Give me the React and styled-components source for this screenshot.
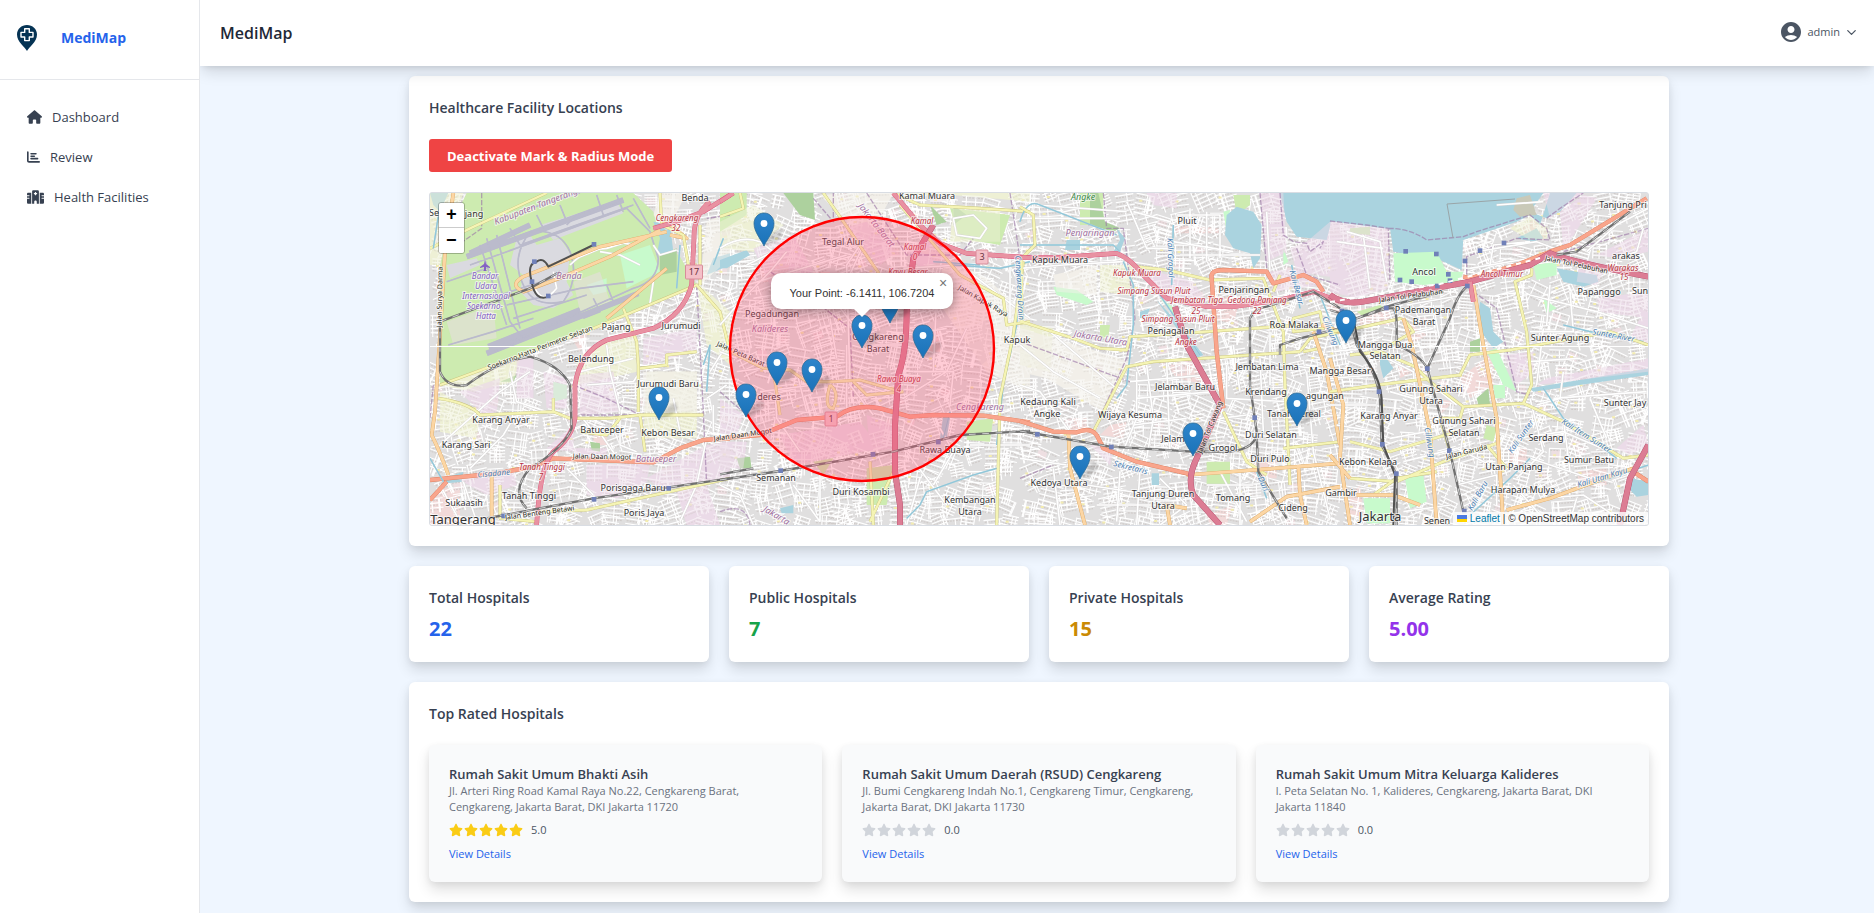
import React from "react";
import styled, { createGlobalStyle } from "styled-components";
import { FaHouse, FaChartBar, FaHospital, FaStar } from "react-icons/fa6";
import { MdAccountCircle } from "react-icons/md";
import { ChevronDown } from "lucide-react";

const GlobalStyle = createGlobalStyle`
  *, *::before, *::after { box-sizing: border-box; }
  body {
    margin: 0;
    background: #eff6ff;
    color: #374151;
    font-family: "Open Sans", "Noto Sans", sans-serif;
    font-size: 13px;
    line-height: 16px;
  }
  h1, h2, h3, p, ul { margin: 0; padding: 0; }
`;

const shadow = "0 8px 14px rgba(0, 0, 0, 0.12), 0 2px 6px rgba(0, 0, 0, 0.06)";

const Shell = styled.div`
  display: grid;
  grid-template-columns: 200px minmax(0, 1fr);
  min-height: 100vh;
`;

const Sidebar = styled.aside`
  position: relative;
  z-index: 6;
  background: #fff;
  border-right: 1px solid #e5e7eb;
`;

const Brand = styled.a`
  display: flex;
  align-items: center;
  gap: 24px;
  height: 80px;
  padding: 0 17px 3px;
  border-bottom: 1px solid #e5e7eb;
  color: #2563eb;
  font-size: 14px;
  font-weight: 700;
  text-decoration: none;
`;

const NavList = styled.ul`
  list-style: none;
  padding: 17px 27px;
`;

const NavLink = styled.a`
  display: flex;
  align-items: center;
  gap: 10px;
  height: 40px;
  color: #374151;
  text-decoration: none;
  svg {
    width: ${(p) => p.$iconWidth}px;
    height: 14px;
  }
`;

const Page = styled.div`
  display: flex;
  flex-direction: column;
  min-width: 0;
`;

const TopBar = styled.header`
  position: sticky;
  top: 0;
  z-index: 5;
  display: flex;
  align-items: center;
  justify-content: space-between;
  height: 66px;
  padding: 0 15px 0 20px;
  background: #fff;
  box-shadow: 0 8px 14px -2px rgba(0, 0, 0, 0.13), 0 3px 6px -3px rgba(0, 0, 0, 0.12);
`;

const PageTitle = styled.h1`
  color: #1f2937;
  font-size: 16px;
  line-height: 24px;
  font-weight: 600;
`;

const UserButton = styled.button`
  display: flex;
  align-items: center;
  gap: 4px;
  padding: 0 0 2px;
  border: 0;
  background: none;
  color: #4b5563;
  font: inherit;
  font-size: 11px;
  cursor: pointer;
`;

const Content = styled.main`
  display: flex;
  flex-direction: column;
  gap: 20px;
  width: 100%;
  max-width: 1264px;
  margin: 0 auto;
  padding: 10px 0 11px 4px;
`;

const Card = styled.section`
  padding: 20px;
  border-radius: 6px;
  background: #fff;
  box-shadow: ${shadow};
`;

const CardTitle = styled.h2`
  margin-bottom: ${(p) => (p.$tight ? 6 : 19)}px;
  color: #374151;
  font-size: 14px;
  line-height: 24px;
  font-weight: 600;
`;

const ModeButton = styled.button`
  display: block;
  height: 33px;
  margin-bottom: 20px;
  padding: 0 18px;
  border: 0;
  border-radius: 3px;
  background: #ef4444;
  color: #fff;
  font: inherit;
  font-weight: 700;
  cursor: pointer;
`;

const StatGrid = styled.div`
  display: grid;
  grid-template-columns: repeat(4, minmax(0, 1fr));
  gap: 20px;
`;

const StatValue = styled.p`
  color: ${(p) => p.$color};
  font-size: 20px;
  line-height: 26px;
  font-weight: 700;
`;

const HospitalGrid = styled.div`
  display: grid;
  grid-template-columns: repeat(3, minmax(0, 1fr));
  gap: 20px;
`;

const HospitalCard = styled.article`
  padding: 20px;
  border-radius: 6px;
  background: #f9fafb;
  box-shadow: ${shadow};
`;

const HospitalName = styled.h3`
  color: #374151;
  font-size: 13px;
  line-height: 18px;
  font-weight: 600;
`;

const Address = styled.p`
  color: #6b7280;
  font-size: 11px;
`;

const Rating = styled.div`
  display: flex;
  align-items: center;
  gap: 1px;
  height: 16px;
  margin: 7px 0 8px;
  color: ${(p) => (p.$filled ? "#facc15" : "#d1d5db")};
  font-size: 14px;
`;

const Score = styled.span`
  margin-left: 7px;
  color: #4b5563;
  font-size: 11px;
`;

const DetailsLink = styled.a`
  display: block;
  width: fit-content;
  color: #2563eb;
  font-size: 11px;
  text-decoration: none;
`;

const MapFrame = styled.div`
  position: relative;
  height: 334px;
  overflow: hidden;
  border: 1px solid #d9dde3;
  border-radius: 3px;
  background: #e4e2e0;
  font-family: "Liberation Sans", Arial, sans-serif;
`;

const MapCanvas = styled.svg`
  display: block;
  width: 100%;
  height: 100%;
`;

const ZoomControl = styled.div`
  position: absolute;
  top: 9px;
  left: 8px;
  display: flex;
  flex-direction: column;
  border: 1px solid rgba(0, 0, 0, 0.25);
  border-radius: 3px;
  overflow: hidden;
`;

const ZoomButton = styled.button`
  width: 25px;
  height: 25px;
  padding: 0;
  border: 0;
  border-bottom: ${(p) => (p.$divided ? "1px solid #ccc" : "0")};
  background: #fff;
  color: #000;
  font: bold 18px/24px "Liberation Mono", monospace;
  cursor: pointer;
`;

const Popup = styled.div`
  position: absolute;
  top: 80px;
  left: calc(50% - 268px);
  display: flex;
  align-items: center;
  justify-content: center;
  width: 182px;
  height: 36px;
  padding-top: 3px;
  border-radius: 10px;
  background: #fff;
  color: #333;
  font-size: 11px;
  box-shadow: 0 2px 11px rgba(0, 0, 0, 0.4);
  &::after {
    content: "";
    position: absolute;
    top: 36px;
    left: 83px;
    border: 8px solid transparent;
    border-top-color: #fff;
    border-bottom: 0;
  }
`;

const PopupClose = styled.button`
  position: absolute;
  top: 1px;
  right: 0;
  width: 20px;
  height: 19px;
  padding: 0;
  border: 0;
  background: none;
  color: #757575;
  font: 14px/19px "Liberation Sans", Arial, sans-serif;
  cursor: pointer;
`;

const Attribution = styled.div`
  position: absolute;
  right: 0;
  bottom: 0;
  display: flex;
  align-items: center;
  gap: 3px;
  height: 13px;
  padding: 0 4px;
  background: rgba(255, 255, 255, 0.8);
  color: #333;
  font-size: 10px;
  line-height: 13px;
  a { color: #0078a8; text-decoration: none; }
`;

/* ---------- map data ---------- */

const C = {
  grass: "#cdebb0", park: "#c8facc", wood: "#add19e", water: "#aad3df",
  industry: "#ebdbe8", farm: "#eef0d5", retail: "#f2dad9", land: "#f2efe9",
  apron: "#dadae0", house: "#e0dfdf",
};

const kinds = {
  motorway: { edge: "#dc5078", fill: "#e892a2", w: 14 },
  toll: { edge: "#b04a68", fill: "#dc7d94", w: 18 },
  trunk: { edge: "#dc8060", fill: "#f9a58c", w: 13 },
  primary: { edge: "#d9a560", fill: "#fcd6a4", w: 11 },
  secondary: { edge: "#c5c07a", fill: "#f5f4b4", w: 9 },
  minor: { edge: "#d4d2d2", fill: "#ffffff", w: 7 },
  runway: { edge: "#bbbbcc", fill: "#bbbbcc", w: 17 },
  taxi: { edge: "#bbbbcc", fill: "#bbbbcc", w: 5 },
  stream: { edge: "#aad3df", fill: "#8fc5d8", w: 5 },
};

// Each sheet uses thirds of a pixel counted from its own origin.
const sheets = [
  {
    origin: [420, 185],
    areas: [
      [C.farm, "M30 24H130L80 150L60 240H30Z M830 290L930 380V540L860 480Z M560 460L650 440V560L470 600V520Z M60 620L180 690L170 760L60 740Z M60 600L200 545L300 520L280 590L160 620Z M680 560H830V760H670Z"],
      [C.land, "M670 560H830V680H670Z M720 24H800L740 140L700 90Z M860 110L930 80V220L840 300Z"],
      [C.grass, "M140 24H640L700 80L720 160L780 215L830 300L520 430L210 540L60 600V240L80 150Z"],
      [C.apron, "M290 160L330 150L350 180L420 160L450 205L440 290L460 330L400 370L340 360L300 320L310 270L270 240Z M360 120L590 50L610 85L400 165Z M80 240L170 220L180 240L90 280Z"],
      [C.industry, "M80 410L220 360L230 460L100 480Z M460 290L540 260L570 350L480 380Z M460 790H560V830H470Z M120 620L240 580L230 680L190 690Z M370 560L440 580V670L380 670Z M290 520L340 520V640H290Z M480 570L580 560L600 680L480 690Z M500 840L690 835L680 890L590 940L500 930Z M680 880L860 780L930 770V880L720 910Z M670 460L830 430V500L670 540Z M380 790L460 720V800Z M110 880L280 850L290 900L200 930Z M770 920L860 900L900 1020H800Z"],
      [C.park, "M600 210L690 180L720 260L620 310Z M500 300L560 280V320L520 330Z M400 590L440 600V640L400 650Z"],
      [C.wood, "M720 210L770 190V260L720 270Z M510 770L540 775V800L515 795Z M240 590L290 570L280 590Z"],
      [C.water, "M700 110L750 120L760 200L710 210L720 160Z M880 220L930 205V240L860 270Z M30 24H85L60 80L40 60Z M70 880L130 860L125 890L80 895Z"],
      [C.retail, "M30 960L70 910L120 910V1020H30Z M520 740H560V780H520Z M430 420L510 430L480 500Z"],
    ],
    roads: [
      ["runway", "M140 215L610 45 M150 205L330 120 M200 505L655 325 M205 485L480 375"],
      ["taxi", "M200 160L270 410L310 460 M230 150L300 430 M180 180L260 420 M150 240L620 70L690 140L715 220Q715 290 640 310L220 500 M300 90L330 70L480 24 M270 130L300 180L640 60 M330 140Q420 130 450 200Q480 280 430 350Q340 370 310 300Q270 220 330 140 M80 290L200 250 M85 480L220 440L340 400 M440 120L470 90L600 50 M560 300L580 350L650 330 M490 400L540 380L520 340 M350 90L370 130 M420 60L440 110 M530 30L550 90 M590 30L610 80 M640 40L690 130 M240 330L460 260 M260 360L480 310L640 290 M280 400L500 330"],
      ["minor", "M450 240Q500 190 560 190L640 165 M540 200L600 210L660 240 M470 220L590 170L640 180 M700 180L720 210L770 195 M345 310Q370 360 410 310L400 260 M60 780L240 620L330 560 M150 850L250 750L280 700 M440 850L520 930 M480 560L640 520 M500 600L640 590L660 560 M560 480L570 560L600 680 M870 560L920 480 M860 640L920 600 M270 560L290 650L380 680 M600 690V780L650 800 M480 690L520 740L640 745 M760 640L780 740 M700 290L680 420 M880 660V740 M530 730L600 830 M60 900L120 1010 M130 890L170 1010 M860 760L830 900L780 1010 M600 960L740 1000"],
      ["primary", "M100 24L75 200L62 420L45 680L35 750Q60 800 85 870 M740 140L540 185L310 275Q265 300 310 320L430 275L570 215L720 135 M215 870V1020 M710 130L740 110L800 160L750 150 M740 250L560 400"],
      ["secondary", "M60 600L210 545L520 430L830 300L900 380L925 480 M55 640Q150 655 180 690L400 680L450 700L570 700L660 690H850 M660 690L675 800 M655 680V540L650 470L610 370 M720 24L725 120L790 150L805 240H830 M840 300V120 M30 190L150 130L380 24 M400 640V680 M660 550L740 540V510L830 500 M480 740L560 750L600 700 M240 900V1000L350 1010 M350 980L500 975L930 880"],
      ["trunk", "M30 885L230 865L340 845L400 820L700 832L780 790L850 765L930 760 M30 945L80 890"],
      ["motorway", "M700 130L770 110L850 80L930 30 M870 50Q820 90 822 160L815 300Q790 390 700 430L560 465Q480 500 465 600V700Q455 760 400 800Q360 840 350 1020"],
      ["stream", "M30 820L70 890 M850 540L870 480L860 620 M910 160L880 240 M770 310L780 180 M60 60L40 190"],
    ],
    rails: "M60 400V560Q80 610 140 600Q230 530 330 515Q420 540 450 600L455 730Q430 790 330 850Q270 920 320 970 M200 1000L520 940L930 880 M60 410L330 310L420 260",
    darkRails: "M335 290Q320 235 350 230Q370 215 385 245L520 180 M335 290Q345 350 385 335",
    borders: "M185 24V130L100 190 M830 300L850 680L860 900 M480 690H600L850 688 M40 600L30 700 M460 600L560 640L660 690 M930 90L860 100",
    stations: [[343, 230], [336, 290], [385, 333], [522, 178], [522, 943], [251, 993], [746, 910]],
    labels: [
      ["Benda", 826, 48], ["Se", 43, 94], ["jang", 162, 95], ["Pajang", 587, 435], ["Jurumudi", 782, 431],
      ["Belendung", 514, 532], ["Jurumudi Baru", 743, 606], ["Karang Anyar", 242, 714],
      ["Batuceper", 545, 743], ["Kebon Besar", 745, 753], ["Karang Sari", 138, 788],
      ["Tanah Tinggi", 328, 941], ["Porisgaga Baru", 638, 917], ["Sukaasih", 132, 962],
      ["Poris Jaya", 671, 992], ["Tangerang", 128, 1018, "town"],
      ["Bandar", 196, 283, "air"], ["Udara", 197, 313, "air"], ["Internasional", 197, 343, "air"],
      ["Soekarno-", 196, 373, "air"], ["Hatta", 197, 403, "air"],
      ["Benda", 446, 282, "area"], ["Batuceper", 708, 832, "area"], ["Cengkareng", 770, 107, "exit"],
      ["32", 769, 137, "exit"], ["Tanah Tinggi", 365, 855, "exit"], ["7", 364, 884, "exit"],
      ["Kabupaten Tangerang", 350, 72, "area", -21], ["Jalan Surya Darma", 66, 335, "road", -89],
      ["Soekarno Hatta Perimeter Selatan", 362, 495, "road", -21], ["Jalan Daan Mogot", 547, 823, "road", 1],
      ["Jalan Benteng Betawi", 360, 990, "road", -8], ["Cisadane", 222, 873, "river", -5],
    ],
    shields: [["17", 822, 261]],
  },
  {
    origin: [720, 185],
    areas: [
      [C.land, "M300 30L440 170L520 24H400Z M680 220L800 280L930 400V620L800 560L640 330Z"],
      [C.farm, "M0 110L100 60L190 120L100 200L0 190Z M560 30H700L930 50V24H540Z M700 60L840 70V170H690Z"],
      [C.grass, "M0 24H80V90L0 140Z M740 710L820 700L810 770L740 765Z M690 70L870 90L840 180L720 160Z M280 830L340 820L310 870Z M440 850L520 840L500 960L440 960Z"],
      [C.wood, "M190 24H280L285 105L240 90Z M630 60L680 110L650 120Z M50 820L90 815L95 850L60 850Z M700 60L740 90L700 120Z"],
      [C.industry, "M0 640L70 690L50 750L0 745Z M180 750L420 710L480 790L220 840Z M440 690L520 720V790L450 800Z M370 130L440 110L530 200L480 240Z M560 200L650 150L720 210L600 250Z M100 190L220 150L280 260L150 300Z M0 770H80L70 850H0Z"],
      [C.retail, "M120 240L210 220L200 290L130 290Z M600 430L660 440V500H600Z M640 180L730 210L690 250L600 200Z M280 260H330V330H280Z"],
      [C.house, "M740 430L810 400L820 510L760 560Z"],
      [C.water, "M0 225L80 195L90 210L20 250H0Z M670 690L690 700L680 760L660 760Z M180 970L220 960V985L185 985Z"],
    ],
    roads: [
      ["minor", "M0 420L60 350L150 260L200 200 M80 300L380 210 M100 340L380 290L430 180 M50 560L200 540L350 550 M160 520L170 700L240 800 M230 560L260 680 M380 480V680 M100 400L330 330L400 420 M430 600L550 640L680 560L740 430 M560 450L680 430 M650 330L640 560 M550 250L720 240L930 400 M420 180L380 240L390 600L460 690 M120 620L280 600 M330 400L350 520 M450 480H560 M420 640L530 620 M580 560H700L690 660 M660 730L700 800L640 900 M560 800L680 960 M750 780H930 M730 860H820 M600 880L560 1020 M300 860V1010 M220 900L300 1010 M0 900L60 930L100 1020 M0 190Q60 150 120 170L160 200L80 240 M700 100L760 90L800 130L780 160L710 150Z M880 140H930 M870 200V400 M0 500L50 520"],
      ["stream", "M700 240L840 250L930 230 M640 230L780 240 M900 220L890 420L850 600L830 780 M830 850L760 870L620 920L600 960L560 1000 M690 680L670 760"],
      ["secondary", "M0 95L70 70L60 24 M310 24L370 110L480 270L560 310 M0 480L50 510L130 550L210 555L260 590H340L420 585L540 620 M520 24L600 60L780 70L930 80 M930 410L860 420L850 340L720 270L540 60 M910 230L880 450L840 640L830 1020 M450 830L460 1020 M520 860L450 1010 M330 600Q310 670 340 670Q360 620 330 600 M160 555L180 690 M400 590L440 630L550 620"],
      ["trunk", "M0 760L120 750L230 705L350 695Q400 655 480 670L570 695L640 690L790 692L930 712"],
      ["motorway", "M0 50L40 24 M520 24L600 120L660 175L740 205L930 218"],
      ["toll", "M640 120L580 220L560 380Q560 500 535 570L525 720V860L540 960V1020"],
    ],
    rails: "M0 885L180 858L520 800L720 750L930 738 M0 868L100 850",
    borders: "M280 40L340 110L340 24 M150 260L300 360L390 430L400 640 M0 980Q80 950 90 1020 M440 24L560 210L720 210L760 160 M0 620L80 690 M870 24L900 220",
    stations: [[182, 857], [459, 808], [655, 771]],
    labels: [
      ["Kamal Muara", 620, 43], ["Tegal Alur", 368, 180], ["Pegadungan", 157, 395],
      ["Cengkareng", 475, 465], ["Barat", 475, 500], ["deres", 146, 645], ["Kapuk", 890, 473],
      ["Rawa Buaya", 675, 803], ["Semanan", 168, 887], ["Duri Kosambi", 422, 930], ["Kembangan", 750, 954],
      ["Utara", 750, 990], ["Kalideres", 151, 440, "area"], ["Cengkareng", 780, 674, "area"],
      ["Jakarta Barat", 462, 125, "area", 52], ["Jakarta", 165, 1000, "area", 30], ["Kamal", 605, 117, "exit"],
      ["Kamal", 586, 196, "exit"], ["0", 586, 225, "exit"], ["Kayu Besar", 565, 269, "exit"],
      ["Rawa Buaya", 537, 592, "exit"], ["4", 537, 620, "exit"],
      ["Jalan Kapuk Raya", 785, 355, "road", 30], ["Jalan Peta Barat", 60, 512, "road", 24],
      ["Jalan Daan Mogot", 70, 757, "road", -8], ["Cengkareng Drain", 890, 310, "river", 87],
    ],
    shields: [["1", 332, 701], ["3", 785, 216]],
  },
  {
    origin: [1020, 185],
    areas: [
      [C.farm, "M240 240H340L330 330L240 320Z M0 410L100 430L90 560L0 540Z"],
      [C.land, "M0 430L140 470L330 530L250 680L80 580L0 560Z M100 270L230 240L230 330L110 320Z"],
      [C.industry, "M720 24H790L800 200L740 230Z M930 110H960V280L830 260L810 190L860 170Z M370 250L520 290L560 350L420 340Z M380 24H470V70L400 60Z M740 260L850 250L900 300L760 320Z M210 780L280 790L270 840Z"],
      [C.retail, "M460 120L600 130V145H460Z M560 330L660 340L640 420L580 400Z M440 540L540 520L560 600L470 580Z M270 720L320 710L310 760L240 750Z M560 990L640 960L620 1020H570Z M930 320L960 330V380H920Z M700 830L770 830V880H700Z M150 700H200V740H150Z"],
      [C.grass, "M180 24H250V120H180Z M240 420H270L265 455L240 460Z M560 830H630V900H560Z M640 30H690V60L650 90Z"],
      [C.park, "M100 305L170 315L220 350L200 360L110 330Z M420 340L480 380L480 410Z M790 190L805 230L790 240Z M610 80L630 75L620 140Z"],
      [C.wood, "M210 24H235L255 110L300 130L280 140L210 120Z"],
      [C.water, "M780 24H960V110L935 105L920 165L830 155L800 110Z M620 90L650 65L700 80L725 120L720 220L700 250L690 205L640 190L615 150Z M290 130L315 160L300 200H280L300 165Z M140 165H180V195H135Z M395 865H417V900H395Z M360 380L390 370L380 395L360 400Z M410 345L480 420L550 510L530 520L470 430Z"],
    ],
    roads: [
      ["minor", "M0 100H300 M50 60L320 80 M320 50L380 190H460 M340 80L450 110 M470 90H600V220 M460 170L640 200 M480 210H720 M510 70V220 M560 80V230 M740 80L750 260 M0 250L130 240L310 230 M0 480L100 560L240 640 M90 440L160 500L300 620 M350 560V700L300 820 M380 540L400 700L380 820 M440 530L450 800 M350 640L580 620 M340 720L500 700 M330 590L560 570 M600 700L680 690 M620 540V640L800 650 M640 480L660 620 M720 520L730 740 M750 440V600 M700 330L810 340 M420 880L500 960L420 1020 M100 850L120 1020 M300 860L290 1010 M360 850L350 1020 M200 900L400 930 M230 960H440 M660 860V1020 M740 870L760 1000 M600 860L680 1010 M860 560L880 800L930 1000 M800 540L960 560 M830 700L960 690 M560 900H700 M0 600L60 620L150 740 M0 820L140 840"],
      ["stream", "M0 110Q20 40 60 60L290 150 M310 230L340 300L340 420L320 600L290 640 M460 120L455 300 M320 215L420 330L540 510 M0 180H280L300 200 M815 240L840 370 M900 330L960 480 M710 860L740 940 M0 240L10 400"],
      ["secondary", "M0 65L40 90L45 180L5 220V410L160 460L240 490L320 495L330 455L560 440L840 420 M220 740L320 545L400 530L840 500 M0 410L20 415 M350 245L440 255L570 285L730 280L790 440 M780 270L760 320 M840 500L870 460L960 440 M790 440L795 600L810 900 M610 680L680 830L740 870 M790 790L960 770 M820 400L900 380L910 430L820 440Z M850 500L900 490"],
      ["primary", "M145 740L150 850L195 1020 M500 870L700 855L960 835 M690 1010L800 935L960 905 M880 440L920 560L960 780 M835 840L840 930L860 1020 M450 1020L440 960L500 970 M905 420L960 440"],
      ["trunk", "M0 708L100 740L170 742Q210 725 230 750L250 790L350 830L500 865L520 870 M610 670L590 500L575 280Q570 255 610 255L740 260L760 295L850 270L890 290L910 320"],
      ["motorway", "M0 218H110L290 205Q330 220 370 270L440 340L560 365H640L780 345L880 320L960 350"],
      ["toll", "M465 365L500 480L600 660L530 820Q500 880 520 930L600 1020"],
    ],
    rails: "M0 738L270 785L520 800L630 800Q710 790 710 740L690 600V400Q700 370 740 365L880 320L960 370 M710 750L715 860L800 1000 M780 510V480L840 460L960 430",
    darkRails: null,
    borders: "M250 24L260 130L310 130L345 400L320 520L220 740 M720 24L740 250 M780 24L790 150L820 170L860 175L870 200L910 170L900 190 M0 470L330 590 M830 190L860 270L960 300 M0 880L100 840",
    stations: [[52, 748], [274, 786], [704, 698], [897, 440]],
    labels: [
      ["Pluit", 500, 118], ["Kapuk Muara", 120, 235], ["Penjaringan", 673, 325], ["Roa Malaka", 822, 428],
      ["Penjagalan", 452, 448], ["Jembatan Lima", 742, 555], ["Jelambar Baru", 494, 614],
      ["Krendang", 737, 630], ["agungan", 915, 642], ["Kedaung Kali", 83, 659], ["Angke", 82, 695],
      ["Wijaya Kesuma", 329, 699], ["Tanah Sereal", 822, 696], ["Jelam", 459, 771],
      ["Duri Selatan", 753, 760], ["Grogol", 610, 798], ["Duri Pulo", 750, 830], ["Kedoya Utara", 116, 903],
      ["Tanjung Duren", 430, 936], ["Utara", 429, 971], ["Tomang", 640, 949], ["Cideng", 820, 978],
      ["Angke", 190, 46, "wet"], ["Penjaringan", 210, 154, "area"],
      ["Jakarta Utara", 240, 468, "area", 10], ["Kapuk Muara", 350, 274, "exit"],
      ["Simpang Susun Pluit", 402, 326, "exit"], ["Jembatan Tiga", 530, 355, "exit"], ["Gedong Panjang", 712, 355, "exit"],
      ["25", 528, 386, "exit"], ["22", 711, 386, "exit"], ["Simpang Susun Pluit", 474, 410, "exit"],
      ["Angke", 497, 480, "exit"], ["Kali Grogol", 445, 220, "river", 88], ["Kali Besar", 822, 310, "river", 75],
      ["Ciliwung", 925, 440, "river", 68], ["Sekretaris", 330, 855, "river", 14], ["Duri", 722, 900, "river", 65],
      ["Jalan Tol Cawang", 576, 730, "road", -68],
    ],
    shields: [],
  },
  {
    origin: [1330, 185],
    areas: [
      [C.industry, "M0 110L175 130V310L80 340L0 320Z M640 24H760L660 100L650 60Z M690 80L760 30L800 40L700 200Z M800 340L955 320V400L810 380Z M930 400H955V480L900 460Z M520 510L610 500V560L560 600Z M650 580L955 520V560L620 600Z M860 790L940 720L955 780L900 810Z M750 220L830 240L800 300L740 290Z M800 210L955 130V200L860 220Z"],
      [C.retail, "M390 580L490 500V600L420 640Z M80 370L180 370V420H90Z M220 400L290 450L240 480Z M540 790H590V840H540Z M60 930L90 900L100 990L50 1000Z M740 860L830 850V900L750 910Z M320 640L370 650L330 690Z M200 530L250 560L210 580Z"],
      [C.water, "M0 24H660L630 120L600 90L560 110L400 165L300 175L175 132L0 108Z M180 130L300 165L400 158L395 255L330 225L190 200Z M600 80L650 100L690 80L740 24H640Z M680 250L740 260L800 270L805 290L760 305L700 290Z M450 350L480 370L490 440L520 470L490 490L460 450L445 390Z M600 610L955 550V570L610 620Z M905 880L955 890V930L920 935L895 910Z M150 490L190 550L160 580L150 540Z M560 160L620 130L640 160L610 170Z"],
      [C.park, "M190 205L320 200L350 260H400L390 290L280 300L195 290Z M470 500L500 490L560 620L520 600Z M100 940H180V1015H110Z M225 880L280 870L290 950L240 970Z M610 240L680 230V270L620 285Z M640 340L680 370L650 385Z M490 600H525V640H495Z"],
      [C.grass, "M80 380L150 360L170 370L100 395Z M470 720L500 730L490 770L460 760Z M60 130L120 125V150L60 145Z"],
      [C.wood, "M440 640L475 610L480 660L445 660Z M420 470L450 460V500L420 500Z"],
      ["#c9c9b8", "M560 40L600 30L620 90L570 95L550 75Z"],
      [C.farm, "M540 130L600 95L655 130L650 160L600 165Z"],
      [C.retail, "M570 130L610 105L650 140L640 165L590 150Z"],
    ],
    roads: [
      ["minor", "M50 140L150 170L170 290 M20 170L160 190 M100 150L120 310 M230 360L400 330 M310 360L330 470L290 540 M220 450L310 430 M480 240L490 180L600 170 M440 200L620 170L700 200 M420 250L600 220 M600 330L800 380 M660 300L650 420 M720 320L730 440L600 440 M800 380L955 430 M590 530L750 520 M640 430L620 600 M700 560L690 640L620 660 M670 640L950 620 M780 640L830 760 M560 700L540 640 M600 640L640 800L560 880 M560 760L700 740L840 800 M600 820L780 880 M700 700L720 860 M230 780L380 740 M250 640L330 620L380 660 M0 660H140 M20 720L140 740 M170 520L250 560L260 700 M180 620L250 640 M170 700L280 700 M180 760L290 740 M220 830L380 790L480 840 M400 740L380 880 M400 660L500 680 M380 900L500 870V960 M550 900L640 1000 M640 940L760 930L880 1010 M740 940L720 1010 M300 870L330 1010 M220 980L360 960 M500 60L640 50 M860 220L920 200L940 130 M770 200L860 120L955 70 M0 580L130 570 M10 500L100 490"],
      ["stream", "M600 820L540 880L410 1000 M640 610L700 700L860 820 M940 470L780 440L700 420 M720 920L955 840 M280 650L310 820"],
      ["secondary", "M0 440L80 430L215 400 M60 510L150 500L255 545L300 590L400 665L580 655L605 600L590 440L555 290L605 270V250 M0 620L140 600L390 570L420 510L540 495L840 440L955 480 M580 655L700 710L880 820L955 810 M60 770L180 800L380 740 M60 880L200 890L340 830L500 775 M400 665L390 700H330L360 800 M180 480L250 440L220 400 M130 930L200 880L320 860 M470 780L530 850"],
      ["primary", "M220 400L245 480L300 740L320 1020 M430 300L460 480L500 700L520 1020 M530 975L660 940L850 870L910 850 M0 520L40 660L30 820L60 1020 M80 930H190L270 960 M0 810L60 880"],
      ["trunk", "M400 275L420 280L560 240L660 200L720 180L950 40 M910 860L955 890"],
      ["toll", "M0 330Q40 360 100 350L420 290L600 240L660 205Q720 230 955 275 M955 780L900 880L870 1020"],
      ["motorway", "M420 290L430 350"],
    ],
    rails: "M0 375L80 400L170 370H190Q200 380 200 420V480Q270 510 292 550L360 800L400 980 M60 400L80 480Q140 560 150 640L155 780L200 870V1020 M412 303Q380 330 360 400L292 550 M80 400L170 365L340 320 M680 210L740 200L900 80",
    darkRails: "M70 400L90 500Q150 570 155 640L160 780L195 870L190 1020",
    borders: "M0 108L110 120L175 130L180 290 M175 130Q240 130 290 165L400 155L440 140L600 90L650 130L660 165L560 160L410 215L410 300 M430 320L500 370L560 620L600 630 M700 200L955 130 M650 100L690 70L760 24",
    stations: [[36, 378], [169, 369], [210, 285], [245, 290], [322, 303], [360, 287], [412, 303], [450, 197], [522, 174], [405, 228], [319, 207], [355, 268], [292, 551], [147, 620], [157, 778], [199, 866], [358, 797], [403, 978], [227, 199]],
    labels: [
      ["Tanjung Pri", 880, 70], ["arakas", 888, 222], ["Ancol", 283, 270], ["Papanggo", 806, 330],
      ["Sun", 930, 327], ["Pademangan", 280, 385], ["Barat", 281, 419], ["Sunter Agung", 691, 467],
      ["Mangga Dua", 165, 488], ["Selatan", 166, 523], ["Mangga Besar", 30, 567], ["Gunung Sahari", 304, 620],
      ["Utara", 304, 656], ["Sunter Jay", 886, 662], ["Karang Anyar", 178, 701], ["Gunung Sahari", 401, 717],
      ["Selatan", 401, 753], ["Serdang", 647, 768], ["Sumur Batu", 776, 834], ["Kebon Kelapa", 115, 841],
      ["Utan Panjang", 553, 854], ["Gambir", 32, 934], ["Harapan Mulya", 579, 925], ["Jakarta", 150, 1009, "town"],
      ["Senen", 321, 1018], ["Ancol Timur", 515, 276, "exit"], ["Warakas", 880, 257, "exit"], ["15", 882, 286, "exit"],
      ["Jalan Tol Pelabuhan", 243, 338, "road", -8], ["Jalan Tol Pelabuhan", 738, 246, "road", 12],
      ["Jalan Garuda", 410, 806, "road", -14], ["Sunter River", 848, 458, "river", 10],
      ["Kali Item Sunter", 765, 760, "river", 32], ["Kali Sunter", 580, 760, "river", -55],
      ["Kali Utan Kayu", 820, 885, "river", -17], ["Kali Baru", 450, 935, "river", -60], ["Ciliwung", 290, 775, "river", 80],
    ],
    shields: [],
  },
];

const labelStyles = {
  place: { fontSize: 9, fill: "#333" },
  town: { fontSize: 13, fill: "#333" },
  air: { fontSize: 8, fill: "#8461c4", fontStyle: "italic" },
  area: { fontSize: 9, fill: "#a0709f", fontStyle: "italic" },
  exit: { fontSize: 8, fill: "#b8323e", fontStyle: "italic" },
  road: { fontSize: 7, fill: "#2b2b22" },
  river: { fontSize: 8, fill: "#4d80b3", fontStyle: "italic" },
  wet: { fontSize: 9, fill: "#3f8a4d", fontStyle: "italic" },
};

const pins = [
  [764, 246], [890, 323], [1346, 343], [862, 348], [923, 358], [777, 385], [812, 392],
  [746, 417], [659, 420], [1297, 426], [1193, 456], [1080, 479],
];

// Repeatable pseudo-random blocks of side streets, houses and small plots.
function buildStreets() {
  let seed = 7;
  const rnd = () => {
    seed = (seed * 16807) % 2147483647;
    return seed / 2147483647;
  };
  let streets = "";
  let houses = "";
  let dots = "";
  let plots = "";
  for (let y = 190; y < 530; y += 17) {
    for (let x = 428; x < 1652; x += 19) {
      const angle = (rnd() - 0.5) * 0.9;
      const size = 13 + rnd() * 12;
      const cx = x + rnd() * 8;
      const cy = y + rnd() * 8;
      const cos = Math.cos(angle);
      const sin = Math.sin(angle);
      const at = (u, v) => `${(cx + u * cos - v * sin).toFixed(1)} ${(cy + u * sin + v * cos).toFixed(1)}`;
      const rows = 3 + Math.floor(rnd() * 3);
      for (let i = 0; i < rows; i += 1) {
        const v = (i / rows) * size;
        streets += `M${at(0, v)}L${at(size, v)}`;
        houses += `M${at(1, v + 2)}L${at(size - 2, v + 2)}`;
      }
      const cols = 1 + Math.floor(rnd() * 4);
      for (let i = 0; i < cols; i += 1) {
        const u = rnd() * size;
        streets += `M${at(u, 0)}L${at(u, size)}`;
      }
      if (rnd() > 0.6) dots += `M${at(4, 6)}h3v2h-3z`;
      if (rnd() > 0.9) plots += `M${at(2, 2)}L${at(11, 2)}L${at(12, 9)}L${at(3, 10)}Z`;
    }
  }
  return { streets, houses, dots, plots };
}
const texture = buildStreets();

const ground = [C.industry, C.retail, C.farm, C.land, C.house];
const place = (sheet) => `translate(${sheet.origin[0]} ${sheet.origin[1]}) scale(0.33333)`;

function Pin({ x, y }) {
  return (
    <g transform={`translate(${x} ${y})`}>
      <path d="M0 0L8-12Q15-19 18-15Q20-10 11-4Z" fill="#222" opacity="0.180" filter="url(#pinBlur)" />
      <path d="M0 0C-2-5-10-14-10-22.500C-10-28-6-33-0-33C6-33 10-28 10-22.500C10-14 2-5 0 0Z" fill="url(#pinFill)" stroke="#2e6c97" strokeWidth="0.800" />
      <circle cx="0" cy="-22.500" r="3.400" fill="#fff" />
    </g>
  );
}

function StreetMap() {
  return (
    <MapCanvas viewBox="430 193 1218 332" preserveAspectRatio="xMidYMid slice" role="img" aria-label="Street map of hospitals">
      <defs>
        <linearGradient id="pinFill" x1="0" y1="0" x2="0" y2="1">
          <stop offset="0" stopColor="#2e85cb" />
          <stop offset="1" stopColor="#1a72b8" />
        </linearGradient>
        <filter id="pinBlur"><feGaussianBlur stdDeviation="1" /></filter>
      </defs>
      <rect x="430" y="193" width="1218" height="332" fill="#e0dfdf" />
      {sheets.map((s) => (
        <g key={s.origin[0]} transform={place(s)}>
          {s.areas.filter(([c]) => ground.includes(c)).map(([color, d], i) => <path key={i} d={d} fill={color} />)}
        </g>
      ))}
      <path d={texture.plots} fill="#eedfe2" />
      <path d={texture.houses} stroke="#c6bfbc" strokeWidth="1.200" strokeDasharray="2 1" opacity="0.600" />
      <path d={texture.streets} stroke="#fff" strokeWidth="1.100" fill="none" />
      <path d={texture.dots} fill="#f3ecb0" />
      {sheets.map((s) => (
        <g key={s.origin[0]} transform={place(s)}>
          {s.areas.filter(([c]) => !ground.includes(c)).map(([color, d], i) => <path key={i} d={d} fill={color} />)}
          {s.areas.filter(([c]) => [C.industry, C.farm, C.land].includes(c)).map(([color, d], i) => <path key={i} d={d} fill={color} opacity="0.500" />)}
        </g>
      ))}
      {sheets.map((s) => (
        <g key={s.origin[0]} transform={place(s)} fill="none" strokeLinejoin="round">
          <path d={s.borders} stroke="#9d7aa8" strokeWidth="4" strokeDasharray="16 5" opacity="0.650" />
          {s.roads.map(([kind, d], i) => (
            <g key={i}>
              <path d={d} stroke={kinds[kind].edge} strokeWidth={kinds[kind].w} />
              <path d={d} stroke={kinds[kind].fill} strokeWidth={kinds[kind].w - 2} />
            </g>
          ))}
          <path d={s.rails} stroke="#707070" strokeWidth="7" />
          <path d={s.rails} stroke="#cfcfcf" strokeWidth="3" strokeDasharray="20 20" />
          {s.darkRails && <path d={s.darkRails} stroke="#505050" strokeWidth="6" />}
          {s.stations.map(([x, y]) => <rect key={`${x}-${y}`} x={x - 7} y={y - 7} width="14" height="14" fill="#7080b8" />)}
        </g>
      ))}
      <path d="M1447 204L1515 199 M1447 204L1453 238" fill="none" stroke="#9aa5a8" />
      <path d="M1330 302L1440 284L1540 258" fill="none" stroke="#fff" strokeWidth="2" strokeDasharray="5 5" />
      <path d="M430 346.500H545 M1400 346.500H1648" stroke="#fff" />
      <path d="M485 260l1 4l4 3v1l-4-1v3l1 1h-4l1-1v-3l-4 1v-1l4-3z" fill="#8461c4" />
      <g fontFamily="'Noto Sans', 'Open Sans', sans-serif" textAnchor="middle" stroke="#fff" strokeOpacity="0.650" strokeWidth="2" paintOrder="stroke" strokeLinejoin="round">
        {sheets.flatMap((s) => s.labels.map(([text, lx, ly, kind = "place", turn = 0]) => {
          const x = Math.round(s.origin[0] + lx / 3);
          const y = Math.round(s.origin[1] + ly / 3);
          return (
            <text key={`${text}-${x}-${y}`} x={x} y={y} {...labelStyles[kind]} transform={turn ? `rotate(${turn} ${x} ${y})` : undefined}>
              {text}
            </text>
          );
        }))}
      </g>
      {sheets.flatMap((s) => s.shields.map(([text, lx, ly]) => {
        const x = Math.round(s.origin[0] + lx / 3);
        const y = Math.round(s.origin[1] + ly / 3);
        const w = text.length > 1 ? 17 : 12;
        return (
          <g key={`${text}-${x}`}>
            <rect x={x - w / 2} y={y - 7} width={w} height="14" rx="1" fill="#f4c0c8" stroke="#d88c9a" />
            <text x={x} y={y + 3} fontFamily="'Noto Sans', sans-serif" fontSize="9" textAnchor="middle" fill="#6b3340">{text}</text>
          </g>
        );
      }))}
      <circle cx="862" cy="349" r="132" fill="#ff5577" fillOpacity="0.300" stroke="#f00" strokeWidth="2.400" />
      {pins.map(([x, y]) => <Pin key={`${x}-${y}`} x={x} y={y} />)}
    </MapCanvas>
  );
}

function LogoPin() {
  return (
    <svg width="20" height="26" viewBox="0 0 20 26" aria-hidden="true">
      <path d="M10 26C8 22 0 17 0 9.500C0 4 4.500 0 10 0S20 4 20 9.500C20 17 12 22 10 26Z" fill="#053354" />
      <path d="M7.700 3.800H12.300V7.400H16V12H12.300V15.600H7.700V12H4V7.400H7.700Z" fill="#053354" stroke="#fff" strokeWidth="1.400" strokeLinejoin="round" />
    </svg>
  );
}

const navItems = [
  ["Dashboard", FaHouse, 15],
  ["Review", FaChartBar, 13],
  ["Health Facilities", FaHospital, 17],
];

const stats = [
  ["Total Hospitals", "22", "#2563eb"],
  ["Public Hospitals", "7", "#16a34a"],
  ["Private Hospitals", "15", "#ca8a04"],
  ["Average Rating", "5.00", "#9333ea"],
];

const hospitals = [
  ["Rumah Sakit Umum Bhakti Asih", "Jl. Arteri Ring Road Kamal Raya No.22, Cengkareng Barat, Cengkareng, Jakarta Barat, DKI Jakarta 11720", 5],
  ["Rumah Sakit Umum Daerah (RSUD) Cengkareng", "Jl. Bumi Cengkareng Indah No.1, Cengkareng Timur, Cengkareng, Jakarta Barat, DKI Jakarta 11730", 0],
  ["Rumah Sakit Umum Mitra Keluarga Kalideres", "l. Peta Selatan No. 1, Kalideres, Cengkareng, Jakarta Barat, DKI Jakarta 11840", 0],
];

export default function App() {
  return (
    <>
      <GlobalStyle />
      <Shell>
        <Sidebar>
          <Brand href="#home"><LogoPin />MediMap</Brand>
          <nav aria-label="Main">
            <NavList>
              {navItems.map(([label, Icon, width]) => (
                <li key={label}><NavLink href="#nav" $iconWidth={width}><Icon aria-hidden="true" />{label}</NavLink></li>
              ))}
            </NavList>
          </nav>
        </Sidebar>
        <Page>
          <TopBar>
            <PageTitle>MediMap</PageTitle>
            <UserButton type="button">
              <MdAccountCircle size={24} aria-hidden="true" />
              admin
              <ChevronDown size={15} strokeWidth={2} aria-hidden="true" />
            </UserButton>
          </TopBar>
          <Content>
            <Card>
              <CardTitle>Healthcare Facility Locations</CardTitle>
              <ModeButton type="button">Deactivate Mark &amp; Radius Mode</ModeButton>
              <MapFrame>
                <StreetMap />
                <ZoomControl>
                  <ZoomButton type="button" $divided aria-label="Zoom in">+</ZoomButton>
                  <ZoomButton type="button" aria-label="Zoom out">−</ZoomButton>
                </ZoomControl>
                <Popup>
                  Your Point: -6.1411, 106.7204
                  <PopupClose type="button" aria-label="Close popup">×</PopupClose>
                </Popup>
                <Attribution>
                  <svg width="10" height="7" viewBox="0 0 10 7" aria-hidden="true">
                    <path fill="#4c7be1" d="M0 0h10v4H0z" />
                    <path fill="#ffd500" d="M0 4h10v3H0z" />
                  </svg>
                  <a href="#leaflet">Leaflet</a>
                  <span>| © OpenStreetMap contributors</span>
                </Attribution>
              </MapFrame>
            </Card>
            <StatGrid>
              {stats.map(([label, value, color]) => (
                <Card key={label}>
                  <CardTitle $tight>{label}</CardTitle>
                  <StatValue $color={color}>{value}</StatValue>
                </Card>
              ))}
            </StatGrid>
            <Card>
              <CardTitle>Top Rated Hospitals</CardTitle>
              <HospitalGrid>
                {hospitals.map(([name, address, score]) => (
                  <HospitalCard key={name}>
                    <HospitalName>{name}</HospitalName>
                    <Address>{address}</Address>
                    <Rating $filled={score > 0}>
                      {[1, 2, 3, 4, 5].map((n) => <FaStar key={n} aria-hidden="true" />)}
                      <Score>{score.toFixed(1)}</Score>
                    </Rating>
                    <DetailsLink href="#details">View Details</DetailsLink>
                  </HospitalCard>
                ))}
              </HospitalGrid>
            </Card>
          </Content>
        </Page>
      </Shell>
    </>
  );
}
